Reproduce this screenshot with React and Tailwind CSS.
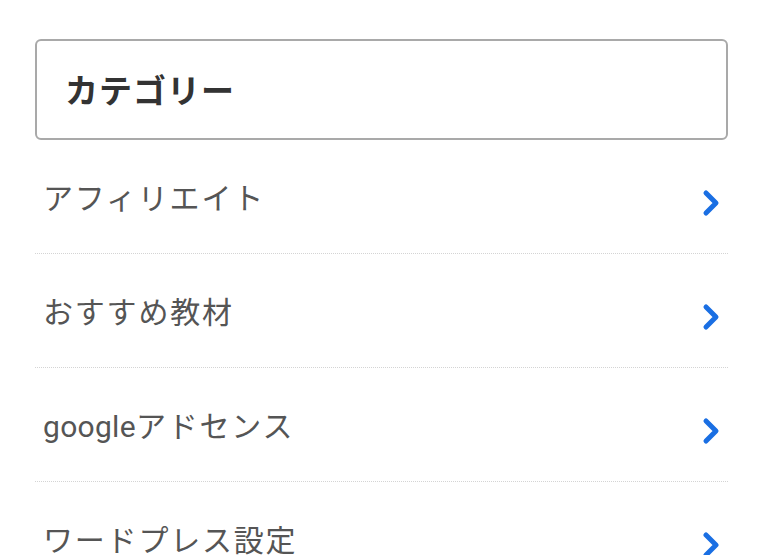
import React from "react";

const items = [
  <>アフィリエイト</>,
  <>おすすめ教材</>,
  <>
    <span className="tracking-[0.01em]">google</span>アドセンス
  </>,
  <>ワードプレス設定</>,
];

function Chevron() {
  return (
    <svg width="22" height="28" viewBox="0 0 22 28" className="shrink-0 mt-[12px]">
      <polyline
        points="6,4 16,14 6,24"
        fill="none"
        stroke="#1a6fe3"
        strokeWidth="5"
        strokeLinecap="round"
        strokeLinejoin="round"
      />
    </svg>
  );
}

export default function App() {
  return (
    <div
      className="w-[768px] h-[555px] overflow-hidden bg-white"
      style={{ fontFamily: '"Roboto", "Noto Sans CJK JP", sans-serif' }}
    >
      <div className="ml-[35px] mt-[39px] w-[693px]">
        <div className="h-[101px] border-2 border-[#a9a9a9] rounded-[6px] flex items-center pl-[28px]">
          <span className="text-[33px] leading-none font-bold text-[#333] tracking-[0.03em] mt-[4px]">カテゴリー</span>
        </div>
        {items.map((t, i) => (
          <div
            key={i}
            className="h-[114px] flex items-center justify-between pl-[8px] pr-[6px] border-b border-dotted border-[#d4d4d4]"
          >
            <span className="text-[30px] leading-none text-[#555] tracking-[0.06em] mt-[4px]">{t}</span>
            <Chevron />
          </div>
        ))}
      </div>
    </div>
  );
}
